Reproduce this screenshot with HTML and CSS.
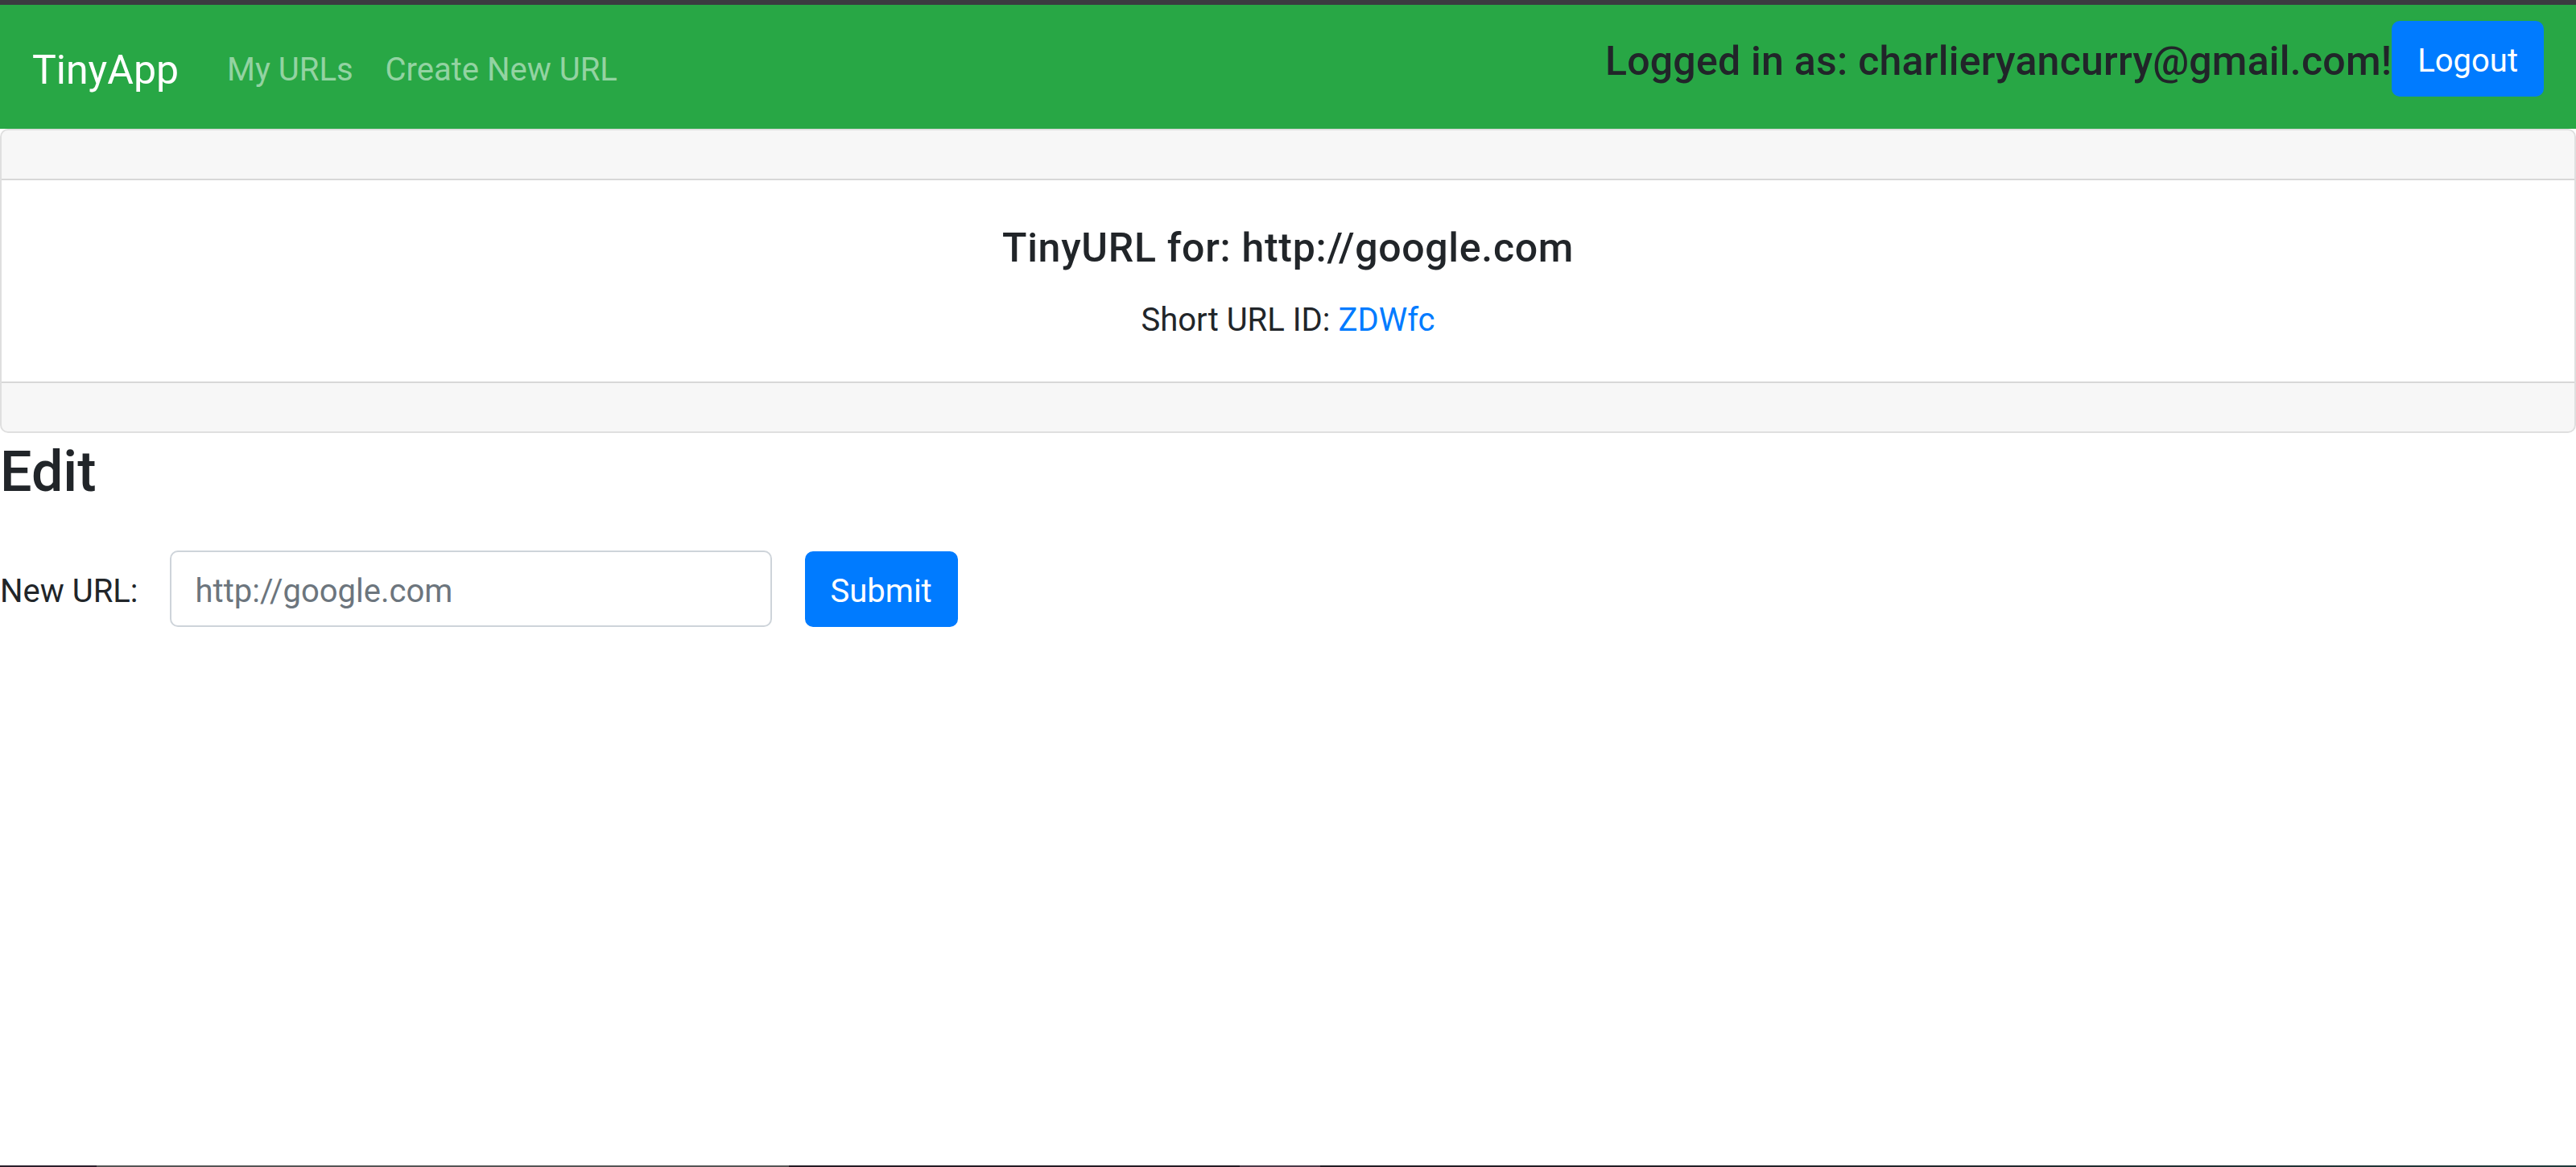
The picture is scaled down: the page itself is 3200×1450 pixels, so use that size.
FILE: index.html
```html
<!DOCTYPE html>
<html lang="en">
<head>
<meta charset="utf-8">
<title>TinyApp</title>
<link rel="stylesheet" href="styles.css">
</head>
<body>
<div class="chrome-top"></div>
<nav class="navbar">
  <div class="nav-left">
    <a class="brand" href="#">TinyApp</a>
    <a class="nav-link" href="#">My URLs</a>
    <a class="nav-link" href="#">Create New URL</a>
  </div>
  <div class="nav-right">
    <span class="user">Logged in as: charlieryancurry@gmail.com!</span>
    <button class="btn btn-primary" type="button">Logout</button>
  </div>
</nav>
<main>
  <div class="card">
    <div class="card-header"></div>
    <div class="card-body">
      <h5 class="card-title">TinyURL for: http://google.com</h5>
      <p class="card-text">Short URL ID: <a class="link" href="#">ZDWfc</a></p>
    </div>
    <div class="card-footer"></div>
  </div>
  <h3 class="edit-title">Edit</h3>
  <form class="edit-form">
    <label class="form-label" for="newurl">New URL:</label>
    <input class="form-control" id="newurl" type="text" placeholder="http://google.com">
    <button class="btn btn-primary submit" type="button">Submit</button>
  </form>
</main>
<div class="chrome-bottom"></div>
</body>
</html>
```
FILE: styles.css
```css
* { box-sizing: border-box; }
html, body { margin: 0; padding: 0; }
body {
  font-family: Roboto, "Liberation Sans", sans-serif;
  font-size: 40px;
  line-height: 60px;
  color: #212529;
  background: #fff;
  min-height: 1450px;
}
.chrome-top { height: 6px; background: #3b3b40; }
.navbar {
  background: #28a745;
  padding: 20px 40px;
  display: flex;
  align-items: center;
  justify-content: space-between;
}
.nav-left { display: flex; align-items: center; padding-top: 8px; }
.brand {
  font-size: 50px;
  line-height: 75px;
  padding: 12.5px 0;
  margin-right: 40px;
  color: #fff;
  text-decoration: none;
}
.nav-link {
  padding: 0 20px;
  color: rgba(255, 255, 255, 0.5);
  text-decoration: none;
}
.nav-right {
  display: flex;
  align-items: center;
  padding-bottom: 20px;
}
.user {
  font-size: 50px;
  font-weight: 500;
  line-height: 60px;
  padding-top: 6px;
  letter-spacing: 0.25px;
  color: #212529;
}
.btn {
  font-family: inherit;
  font-size: 40px;
  line-height: 60px;
  padding: 18px 30px 12px;
  border: 2.5px solid transparent;
  border-radius: 10px;
  cursor: pointer;
}
.btn-primary { background: #007bff; border-color: #007bff; color: #fff; }
.card {
  border: 2px solid rgba(0, 0, 0, 0.125);
  border-radius: 10px;
  overflow: hidden;
}
.card-header {
  height: 62px;
  background: rgba(0, 0, 0, 0.03);
  border-bottom: 2px solid rgba(0, 0, 0, 0.125);
}
.card-body { padding: 54px 50px 46px; text-align: center; }
.card-title {
  margin: 0 0 30px;
  font-size: 50px;
  font-weight: 500;
  line-height: 60px;
  letter-spacing: 0.7px;
}
.card-text { margin: 0; }
.link { color: #007bff; text-decoration: none; }
.card-footer {
  height: 62px;
  background: rgba(0, 0, 0, 0.03);
  border-top: 2px solid rgba(0, 0, 0, 0.125);
}
.edit-title {
  margin: 0 0 14px;
  padding-top: 6px;
  font-size: 70px;
  font-weight: 500;
  line-height: 84px;
}
.edit-form { display: flex; align-items: center; padding-top: 42px; }
.form-label { margin-right: 39px; padding-top: 6px; }
.form-control {
  width: 748px;
  height: 95px;
  padding: 18px 30px 12px;
  font-family: inherit;
  font-size: 40px;
  color: #495057;
  border: 2.5px solid #ced4da;
  border-radius: 10px;
  background: #fff;
}
.form-control::placeholder { color: #6c757d; }
.submit { margin-left: 41px; }
.chrome-bottom {
  position: fixed;
  left: 0; right: 0; bottom: 0;
  height: 2px;
  background: linear-gradient(90deg, #2b1f2b 0 120px, #555 120px 980px, #241c24 980px 1540px, #4a3a48 1540px 1640px, #221d24 1640px 2000px, #1f3a3a 3200px);
}
```
